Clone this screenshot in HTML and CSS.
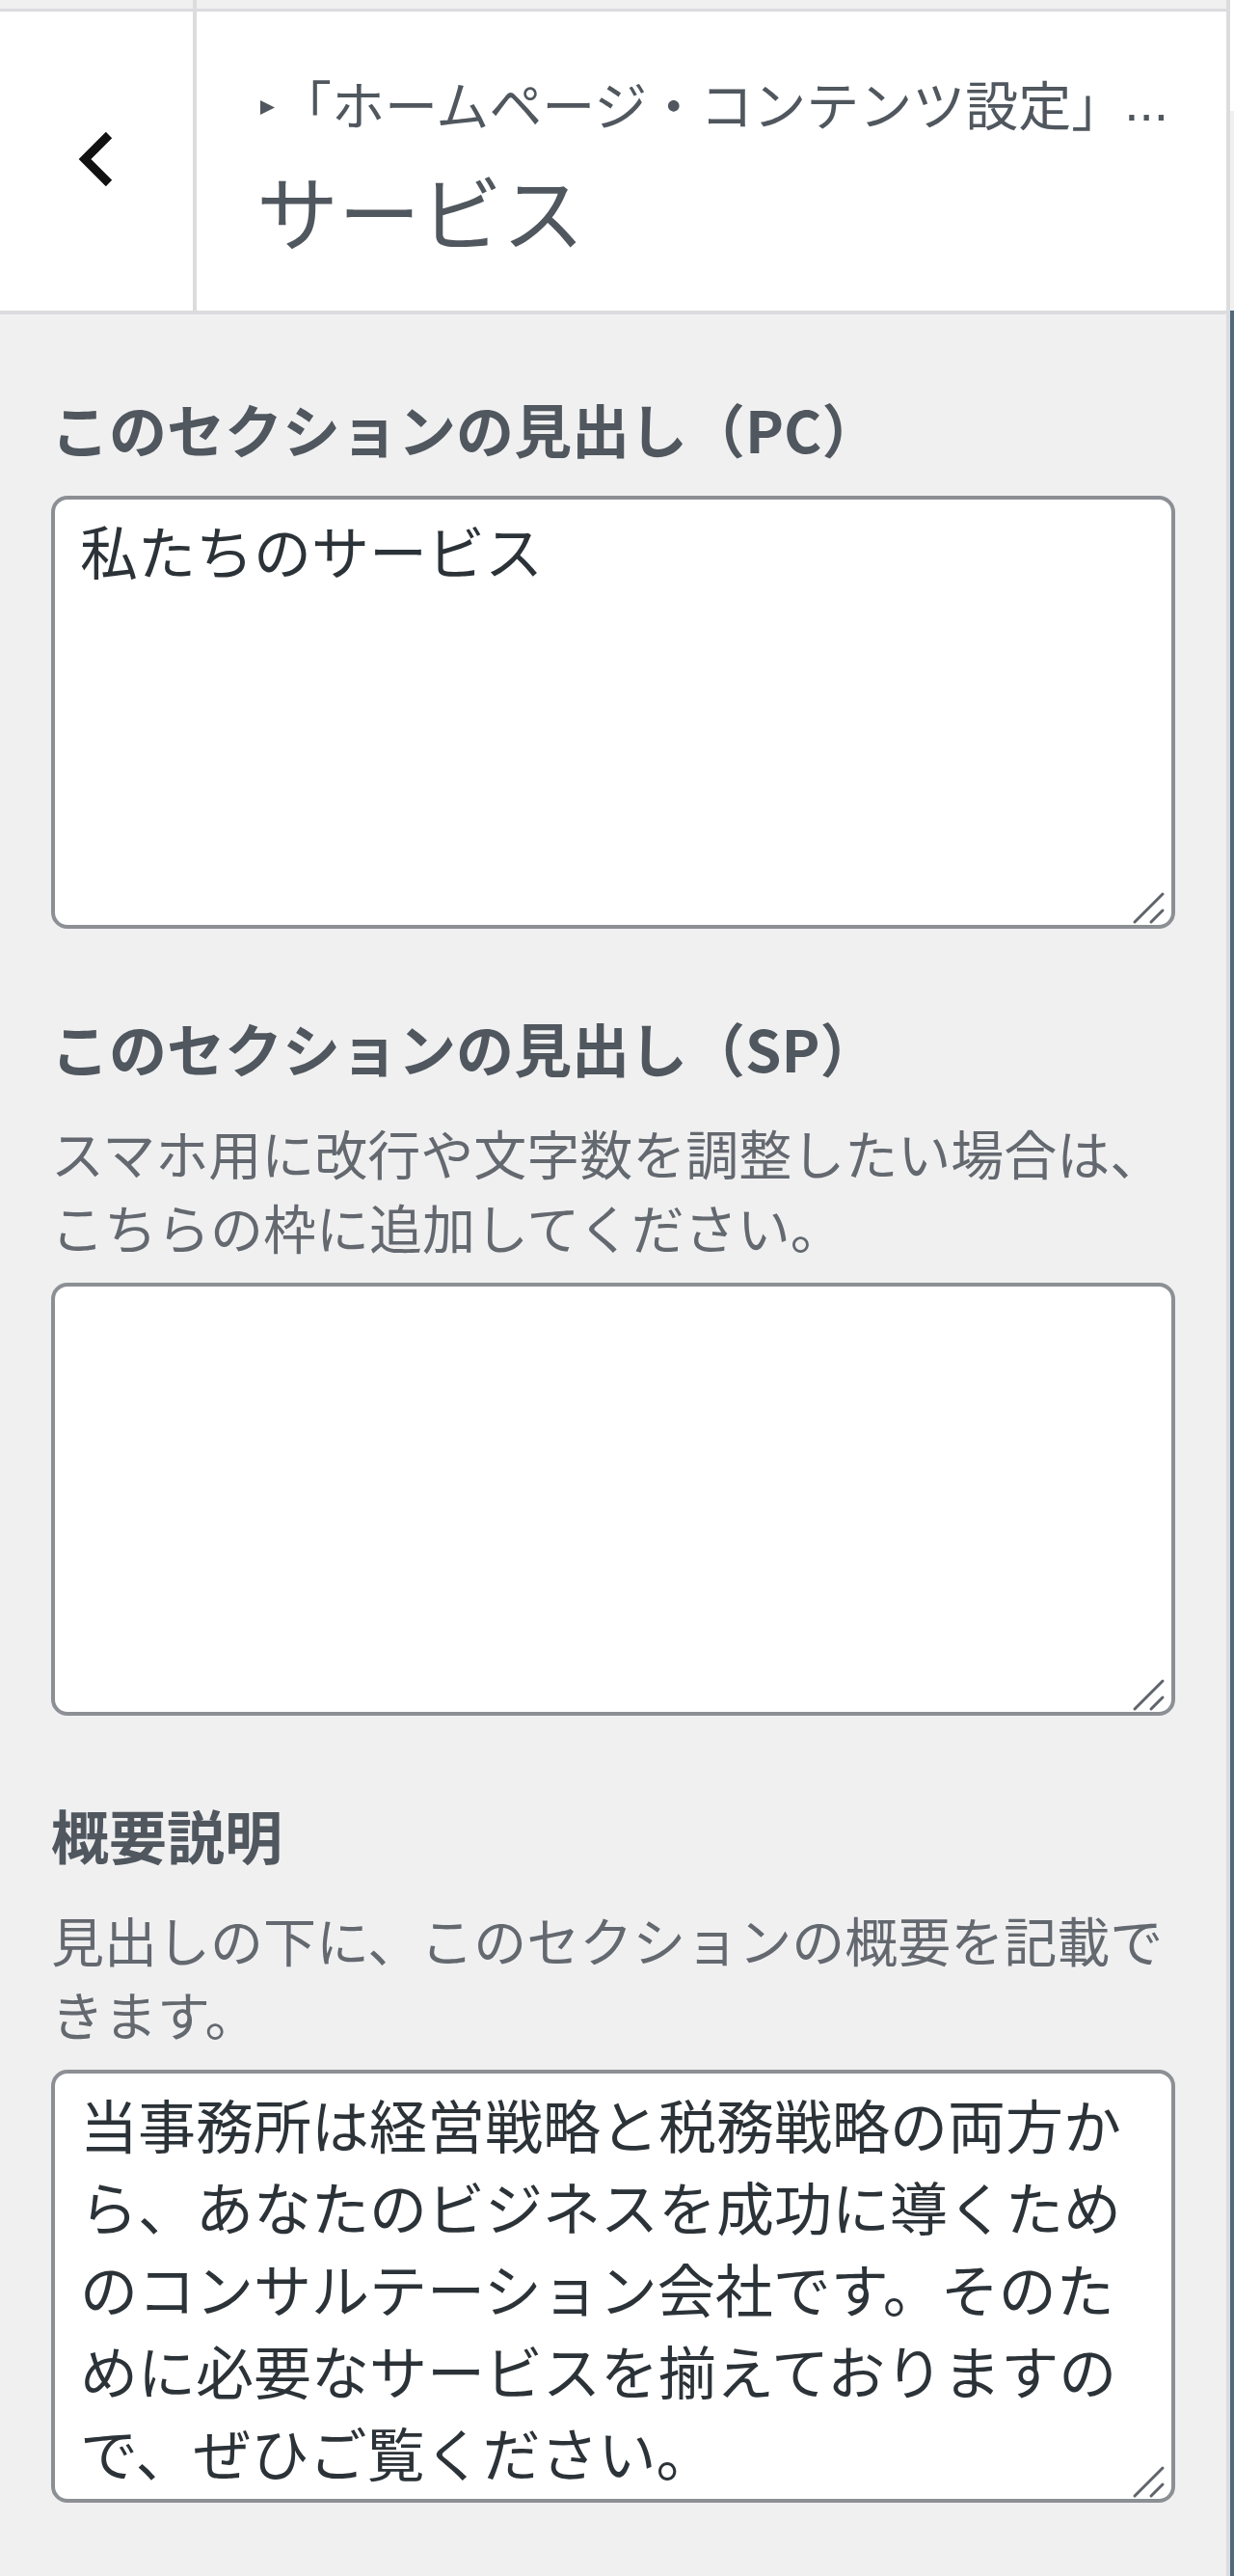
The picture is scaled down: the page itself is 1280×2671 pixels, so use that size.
FILE: index.html
```html
<!DOCTYPE html>
<html lang="ja">
<head>
<meta charset="utf-8">
<title>サービス</title>
<link rel="stylesheet" href="styles.css">
</head>
<body>
<div class="page">
  <div class="panel">
    <div class="topstrip"><div class="ts-back"></div><div class="ts-rest"></div></div>
    <div class="header">
      <div class="back">
        <svg viewBox="0 0 200 310" width="200" height="310" aria-hidden="true">
          <polyline points="113,128 88,153 113,178" fill="none" stroke="#111" stroke-width="9" stroke-linejoin="miter" stroke-linecap="butt"/>
        </svg>
      </div>
      <div class="titlebox">
        <div class="crumb">
          <svg class="tri" viewBox="0 0 16 16" aria-hidden="true"><polygon points="0,0 15,7.5 0,15" fill="#50575e"/></svg>
          <span class="crumb-text">「ホームページ・コンテンツ設定」</span><span class="dots">...</span>
        </div>
        <h3 class="title">サービス</h3>
      </div>
    </div>
    <div class="controls">
      <div class="control">
        <label class="ctitle">このセクションの見出し（PC）</label>
        <div class="field">
          <textarea class="ta">私たちのサービス</textarea>
          <svg class="grip" viewBox="0 0 40 40" aria-hidden="true"><line x1="32" y1="4" x2="3" y2="33" /><line x1="32" y1="21" x2="20" y2="33" /></svg>
        </div>
      </div>
      <div class="control">
        <label class="ctitle">このセクションの見出し（SP）</label>
        <p class="desc">スマホ用に改行や文字数を調整したい場合は、こちらの枠に追加してください。</p>
        <div class="field">
          <textarea class="ta"></textarea>
          <svg class="grip" viewBox="0 0 40 40" aria-hidden="true"><line x1="32" y1="4" x2="3" y2="33" /><line x1="32" y1="21" x2="20" y2="33" /></svg>
        </div>
      </div>
      <div class="control">
        <label class="ctitle">概要説明</label>
        <p class="desc">見出しの下に、このセクションの概要を記載できます。</p>
        <div class="field">
          <textarea class="ta">当事務所は経営戦略と税務戦略の両方から、あなたのビジネスを成功に導くためのコンサルテーション会社です。そのために必要なサービスを揃えておりますので、ぜひご覧ください。</textarea>
          <svg class="grip" viewBox="0 0 40 40" aria-hidden="true"><line x1="32" y1="4" x2="3" y2="33" /><line x1="32" y1="21" x2="20" y2="33" /></svg>
        </div>
      </div>
    </div>
  </div>
  <div class="edge">
    <div class="e1"></div>
    <div class="e2"></div>
    <div class="e3"></div>
  </div>
</div>
</body>
</html>
```
FILE: styles.css
```css
html, body {
  margin: 0;
  padding: 0;
  background: #f0f0f1;
  font-family: "Noto Sans CJK JP", "Noto Sans", sans-serif;
}

.page {
  display: flex;
  min-height: 2671px;
}

.panel {
  width: 1272px;
  flex-shrink: 0;
  border-right: 4px solid #dcdcde;
  background: #f0f0f1;
}

.edge {
  flex: 1;
  display: flex;
  flex-direction: column;
}
.e1 { height: 115px; background: #ffffff; }
.e2 { height: 207px; background: #f0f0f1; }
.e3 { flex: 1; background: #50687b; }

.topstrip {
  height: 9px;
  display: flex;
  background: #f0f0f1;
}
.ts-back {
  width: 200px;
  border-right: 4px solid #dcdcde;
}

.header {
  display: flex;
  height: 310px;
  background: #ffffff;
  border-top: 3px solid #dcdcde;
  border-bottom: 4px solid #dcdcde;
}

.back {
  width: 200px;
  flex-shrink: 0;
  border-right: 4px solid #dcdcde;
}
.back svg {
  display: block;
  width: 200px;
  height: 310px;
}

.titlebox {
  flex: 1;
  min-width: 0;
  padding-left: 62px;
}

.crumb {
  margin-top: 56px;
  height: 77px;
  display: flex;
  align-items: center;
  font-size: 55px;
  line-height: 77px;
  color: #50575e;
  white-space: nowrap;
}
.tri {
  width: 16px;
  height: 16px;
  flex-shrink: 0;
  margin: 11px 3px 0 4px;
}
.dots {
  font-family: "Liberation Sans", sans-serif;
}

.title {
  margin: 20px 0 0;
  font-size: 85px;
  line-height: 103px;
  font-weight: 400;
  color: #50575e;
}

.controls {
  padding: 76px 53px 0;
}

.control {
  margin-bottom: 81px;
}

.ctitle {
  display: block;
  font-size: 60px;
  line-height: 84px;
  font-weight: 700;
  color: #50575e;
  margin-bottom: 28px;
}

.desc {
  margin: 0 0 20px;
  font-size: 55px;
  line-height: 77px;
  color: #646970;
}

.field {
  position: relative;
}

.ta {
  display: block;
  box-sizing: border-box;
  width: 100%;
  height: 449px;
  margin: 0;
  border: 4px solid #8c8f94;
  border-radius: 17px;
  padding: 9px 26px;
  font-family: "Noto Sans CJK JP", "Noto Sans", sans-serif;
  font-size: 60px;
  line-height: 85px;
  color: #2c3338;
  background: #ffffff;
  resize: none;
  overflow: hidden;
}

.grip {
  position: absolute;
  right: 5px;
  bottom: 0;
  width: 40px;
  height: 40px;
  stroke: #5f646a;
  stroke-width: 3;
  stroke-linecap: round;
}
```
